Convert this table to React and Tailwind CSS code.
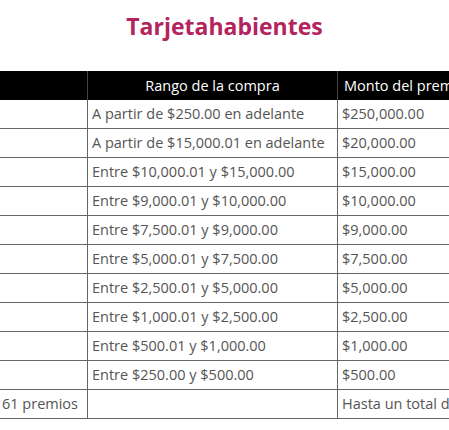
const rows = [
  ["A partir de $250.00 en adelante", "$250,000.00"],
  ["A partir de $15,000.01 en adelante", "$20,000.00"],
  ["Entre $10,000.01 y $15,000.00", "$15,000.00"],
  ["Entre $9,000.01 y $10,000.00", "$10,000.00"],
  ["Entre $7,500.01 y $9,000.00", "$9,000.00"],
  ["Entre $5,000.01 y $7,500.00", "$7,500.00"],
  ["Entre $2,500.01 y $5,000.00", "$5,000.00"],
  ["Entre $1,000.01 y $2,500.00", "$2,500.00"],
  ["Entre $500.01 y $1,000.00", "$1,000.00"],
  ["Entre $250.00 y $500.00", "$500.00"],
];

export default function App() {
  return (
    <div className="w-[449px] h-[430px] overflow-hidden bg-white font-['Open_Sans',sans-serif]">
      <h1 className="pt-[11px] h-[71px] text-center text-[23px] leading-[30px] font-bold text-[#b3245e]">
        Tarjetahabientes
      </h1>

      <div className="w-[640px] text-[14.5px] text-[#555]">
        <div className="flex h-[29px] bg-black text-white">
          <div className="w-[88px] border-r border-[#444]" />
          <div className="w-[250px] flex items-center justify-center border-r border-[#444]">
            Rango de la compra
          </div>
          <div className="flex-1 flex items-center pl-[6px] whitespace-nowrap">
            Monto del premio
          </div>
        </div>

        {rows.map(([range, amount]) => (
          <div key={range} className="flex h-[29px] border-b border-[#666]">
            <div className="w-[88px] border-r border-[#666]" />
            <div className="w-[250px] flex items-center pl-[4px] border-r border-[#666] whitespace-nowrap">
              {range}
            </div>
            <div className="flex-1 flex items-center pl-[4px]">{amount}</div>
          </div>
        ))}

        <div className="flex h-[29px] border-b border-[#666]">
          <div className="w-[88px] flex items-center pl-[2px] border-r border-[#666] whitespace-nowrap">
            61 premios
          </div>
          <div className="w-[250px] border-r border-[#666]" />
          <div className="flex-1 flex items-center pl-[4px] whitespace-nowrap">
            Hasta un total de $1,000,000.00
          </div>
        </div>
      </div>
    </div>
  );
}
